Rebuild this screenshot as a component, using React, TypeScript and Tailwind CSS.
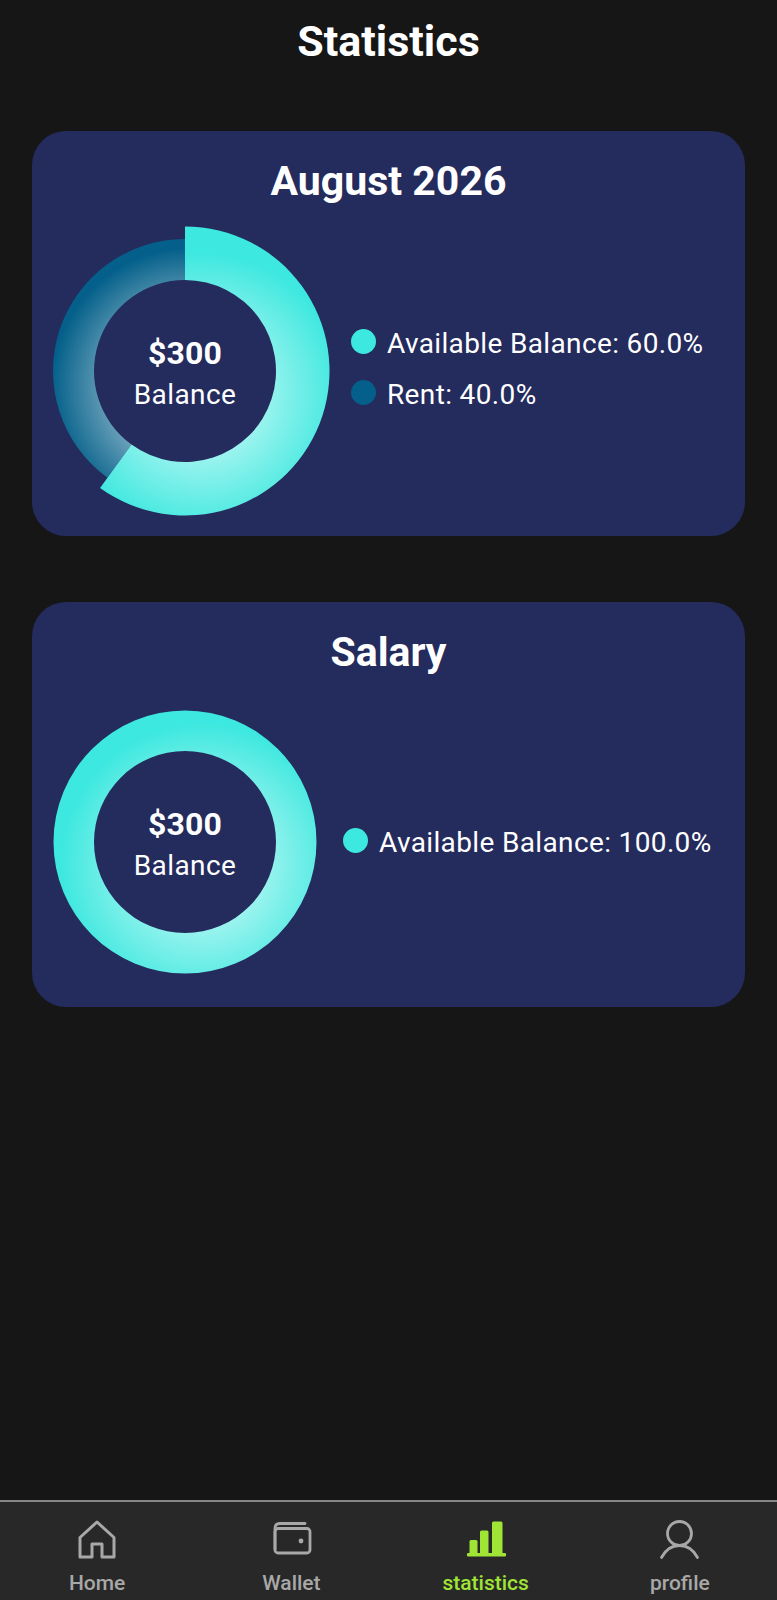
const TEAL = '#3ce8df';
const DARK = '#04608a';

const polar = (c: number, r: number, deg: number) => {
	const a = ((deg - 90) * Math.PI) / 180;
	return `${(c + r * Math.cos(a)).toFixed(2)} ${(c + r * Math.sin(a)).toFixed(2)}`;
};

const arc = (c: number, outer: number, inner: number, from: number, to: number) => {
	const large = to - from > 180 ? 1 : 0;
	return `M${polar(c, outer, from)} A${outer} ${outer} 0 ${large} 1 ${polar(c, outer, to)} L${polar(c, inner, to)} A${inner} ${inner} 0 ${large} 0 ${polar(c, inner, from)} Z`;
};

function Donut({ id, split }: { id: string; split: boolean }) {
	return (
		<div className="relative h-[290px] w-[290px] shrink-0">
			<svg width="290" height="290" viewBox="0 0 290 290" className="block">
				<defs>
					<radialGradient id={`${id}-a`} gradientUnits="userSpaceOnUse" cx="162" cy="168" r="142">
						<stop offset="0" stopColor="#e6fcfa" />
						<stop offset="1" stopColor={TEAL} />
					</radialGradient>
					<radialGradient id={`${id}-b`} gradientUnits="userSpaceOnUse" cx="150" cy="160" r="138">
						<stop offset="0" stopColor="#ffffff" />
						<stop offset="1" stopColor={DARK} />
					</radialGradient>
				</defs>
				{split ? (
					<>
						<path d={arc(145, 132, 91, 216, 360)} fill={`url(#${id}-b)`} />
						<path d={arc(145, 144.5, 91, 0, 216)} fill={`url(#${id}-a)`} />
					</>
				) : (
					<>
						<path d={arc(145, 131.5, 91, 0, 180)} fill={`url(#${id}-a)`} />
						<path d={arc(145, 131.5, 91, 180, 360)} fill={`url(#${id}-a)`} />
					</>
				)}
			</svg>
			<div className="absolute inset-0 flex flex-col items-center justify-center pt-[6px] text-white">
				<span className="text-[32px] font-bold leading-[42px] tracking-[0.2px]">$300</span>
				<span className="text-[28px] leading-[42px] tracking-[0.4px]">Balance</span>
			</div>
		</div>
	);
}

function LegendRow({ color, label }: { color: string; label: string }) {
	return (
		<div className="flex h-[51px] items-center gap-[11px]">
			<span className={`-mt-[5px] h-[25px] w-[25px] rounded-full ${color}`} />
			<span className="text-[28px] tracking-[0.36px] text-white">{label}</span>
		</div>
	);
}

function Card({ title, children }: { title: string; children: React.ReactNode }) {
	return (
		<section className="h-[405px] rounded-[34px] bg-[#242b5d] pt-[23px]">
			<h2 className="text-center text-[41px] font-bold leading-[54px] text-white">{title}</h2>
			<div className="mt-[18px] flex h-[290px] items-center pl-[8px]">{children}</div>
		</section>
	);
}

function Nav() {
	const grey = '#a8a8a8';
	return (
		<nav className="mt-auto grid h-[100px] grid-cols-4 border-t-[2px] border-[#858585] bg-[#282828] pt-[18px]">
			<div className="flex flex-col items-center">
				<svg width="44" height="40" viewBox="0 0 44 40" fill="none" stroke={grey} strokeWidth="3" strokeLinejoin="round">
					<path d="M22 2 L39 17.5 V37 H27 V24 H17 V37 H5 V17.5 Z" />
				</svg>
				<span className="mt-[11px] text-[21px] font-medium leading-[24px] text-[#a8a8a8]">Home</span>
			</div>
			<div className="flex flex-col items-center">
				<svg width="44" height="40" viewBox="0 0 44 40" fill="none" stroke={grey} strokeWidth="2.8" className="ml-[1px]">
					<path d="M35 3.5 H10 Q5 3.5 5 8.5 V29" strokeLinecap="round" />
					<rect x="5" y="8.5" width="35" height="24.5" rx="3" />
					<circle cx="31" cy="21" r="2.4" fill={grey} stroke="none" />
				</svg>
				<span className="mt-[11px] text-[21px] font-medium leading-[24px] text-[#a8a8a8]">Wallet</span>
			</div>
			<div className="flex flex-col items-center">
				<svg width="44" height="40" viewBox="0 0 44 40" fill="#a0e435">
					<rect x="5.5" y="20" width="8" height="14" rx="1.5" />
					<rect x="16" y="10.5" width="8.5" height="23.5" rx="1.5" />
					<rect x="28" y="1.5" width="10.5" height="32.5" rx="1.5" />
					<rect x="3" y="33" width="39" height="3.5" rx="1.2" />
				</svg>
				<span className="mt-[11px] text-[21px] font-medium leading-[24px] text-[#a0e435]">statistics</span>
			</div>
			<div className="flex flex-col items-center">
				<svg width="44" height="40" viewBox="0 0 44 40" fill="none" stroke={grey} strokeWidth="2.8" strokeLinecap="round">
					<circle cx="21.5" cy="13.5" r="12" />
					<path d="M3.5 37.5 C8 29 14 25.5 21.5 25.5 C29 25.5 35 29 39.5 37.5" />
				</svg>
				<span className="mt-[11px] text-[21px] font-medium leading-[24px] text-[#a8a8a8]">profile</span>
			</div>
		</nav>
	);
}

export default function App() {
	return (
		<div className="flex min-h-screen flex-col bg-[#161616] font-[Roboto,sans-serif]">
			<h1 className="h-[131px] pt-[13px] text-center text-[43px] font-bold leading-[56px] text-white">Statistics</h1>

			<main className="flex flex-col gap-[66px] px-[32px]">
				<Card title="August 2026">
					<Donut id="month" split />
					<div className="mb-[3px] ml-[21px]">
						<LegendRow color="bg-[#3ce8df]" label="Available Balance: 60.0%" />
						<LegendRow color="bg-[#04608a]" label="Rent: 40.0%" />
					</div>
				</Card>

				<Card title="Salary">
					<Donut id="salary" split={false} />
					<div className="ml-[13px] mt-[1px]">
						<LegendRow color="bg-[#3ce8df]" label="Available Balance: 100.0%" />
					</div>
				</Card>
			</main>

			<Nav />
		</div>
	);
}
